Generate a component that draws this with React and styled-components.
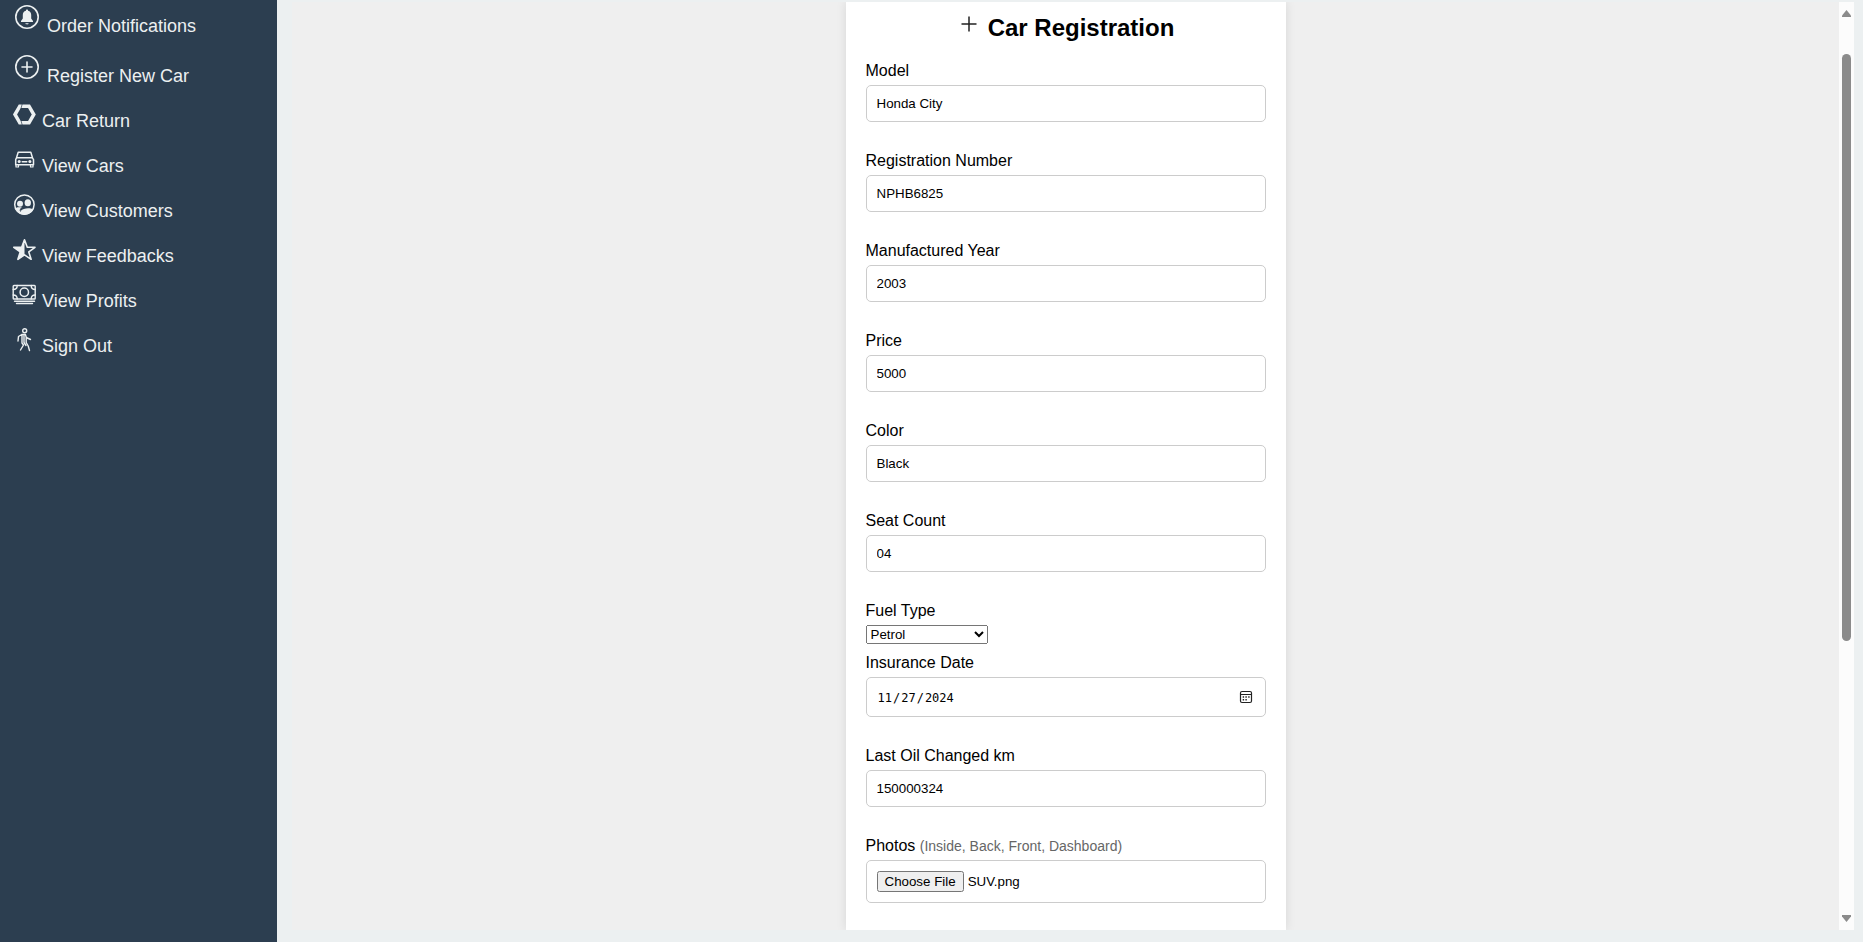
import React, { useEffect, useRef } from "react";
import styled, { createGlobalStyle } from "styled-components";

const GlobalStyle = createGlobalStyle`
  *, *::before, *::after { box-sizing: border-box; }
  body {
    margin: 0;
    background: #ecf0f1;
    color: #000;
    font-family: "Liberation Sans", Arial, sans-serif;
    font-size: 16px;
  }
`;

const Page = styled.div`
  display: flex;
  height: 100vh;
`;

const Sidebar = styled.nav`
  flex: 0 0 277px;
  background: #2c3e50;
`;

const NavList = styled.ul`
  list-style: none;
  margin: 0;
  padding: 1px 0 0 11px;
`;

const NavItem = styled.li`
  height: ${(p) => (p.$large ? 50 : 45)}px;
`;

const NavLink = styled.a`
  display: flex;
  align-items: flex-start;
  gap: ${(p) => (p.$large ? 4 : 5)}px;
  color: #ecf0f1;
  font-size: 18px;
  line-height: 20px;
  text-decoration: none;
`;

const NavIcon = styled.span`
  display: flex;
  align-items: center;
  justify-content: center;
  width: ${(p) => (p.$large ? 32 : 26)}px;
  height: ${(p) => (p.$large ? 32 : 28)}px;

  svg {
    display: block;
    width: 24px;
    height: 24px;
  }
`;

const NavText = styled.span`
  padding-top: ${(p) => (p.$large ? 15 : 10)}px;
`;

const Main = styled.main`
  flex: 1;
  min-width: 0;
  display: flex;
  margin: 2px 9px 12px 15px;
  background: #efefef;
`;

const Viewport = styled.div`
  flex: 1;
  display: flex;
  justify-content: center;
  overflow: hidden;
`;

const Card = styled.form`
  width: 440px;
  padding: 10px 20px 0;
  background: #fff;
  box-shadow: 0 0 10px rgba(0, 0, 0, 0.1);
`;

const Title = styled.h2`
  display: flex;
  justify-content: center;
  gap: 7px;
  margin: 0 0 18px;
  font-size: 24px;
  line-height: 32px;

  svg {
    width: 24px;
    height: 24px;
  }
`;

const Field = styled.div`
  margin-bottom: ${(p) => (p.$tight ? 10 : 30)}px;
`;

const Label = styled.label`
  display: block;
  margin-bottom: 5px;
  line-height: 18px;
`;

const Hint = styled.span`
  color: #666;
  font-size: 14px;
`;

const Input = styled.input`
  display: block;
  width: 100%;
  height: ${(p) => p.$height || 37}px;
  padding: 10px;
  border: 1px solid #ccc;
  border-radius: 5px;
  background: #fff;
  color: #000;
  font-family: "Liberation Sans", Arial, sans-serif;
`;

const DateBox = styled.div`
  position: relative;

  svg {
    position: absolute;
    top: 13px;
    right: 13px;
    width: 14px;
    height: 14px;
    pointer-events: none;
  }
`;

const DateInput = styled(Input)`
  padding-top: 12px;
  font-family: "DejaVu Sans Mono", monospace;
  font-size: 12px;

  &::-webkit-calendar-picker-indicator {
    opacity: 0;
  }
`;

const Select = styled.select`
  display: block;
  width: 122px;
  height: 19px;
  font-family: "Liberation Sans", Arial, sans-serif;
`;

const ScrollTrack = styled.div`
  flex: 0 0 15px;
  display: flex;
  flex-direction: column;
  align-items: center;
  padding: 8px 0;
  background: #fcfcfc;

  svg {
    flex: none;
    width: 9px;
    height: 7px;
    fill: #8b8b8b;
  }
`;

const ScrollLane = styled.div`
  flex: 1;
  display: flex;
  flex-direction: column;
  padding-top: 37px;
`;

const ScrollThumb = styled.div`
  width: 9px;
  height: 68.2%;
  border-radius: 5px;
  background: #8b8b8b;
`;

const line = { fill: "none", stroke: "currentColor", strokeLinecap: "round", strokeLinejoin: "round" };

const BellIcon = () => (
  <svg viewBox="0 0 24 24" {...line}>
    <circle cx="12" cy="12" r="11.2" strokeWidth="1.6" />
    <path d="M12 4.6c-.7 0-1.1.5-1.1 1.1C8.8 6.2 7.8 7.9 7.8 10v3.4L6 16v1h12v-1l-1.8-2.6V10c0-2.1-1-3.8-3.1-4.3 0-.6-.4-1.1-1.1-1.1zM10.3 18.2c.2.8.9 1.2 1.7 1.2s1.5-.4 1.7-1.2z" fill="currentColor" stroke="none" />
  </svg>
);

const PlusCircleIcon = () => (
  <svg viewBox="0 0 24 24" {...line}>
    <circle cx="12" cy="12" r="11.2" strokeWidth="1.6" />
    <path d="M12 7v10M7 12h10" strokeWidth="1.6" />
  </svg>
);

const NutIcon = () => (
  <svg viewBox="0 0 24 24" fill="none" stroke="currentColor">
    <path d="M3 11.5 7.8 3.2h9.2l4.8 8.300L17 19.800H7.800z" strokeWidth="3.500" />
    <path d="M9 5.500 10.200 1M9 17.500l1.200 4.500" stroke="#2c3e50" strokeWidth=".7" />
  </svg>
);

const CarIcon = () => (
  <svg viewBox="0 0 24 24" {...line}>
    <path d="M6.200 4.200h12.600l1.900 6.200.8 1.100v5.200H3.700v-5.200l.6-1.100zM4.500 9.800h16" strokeWidth="1.500" />
    <path d="M4 17v2h2.500v-2M18.500 17v2H21v-2" strokeWidth="1.200" />
    <path d="M10.200 13.700h4.600" strokeWidth="1.400" />
    <circle cx="7.200" cy="13.500" r="1.500" fill="currentColor" stroke="none" />
    <circle cx="17.900" cy="13.500" r="1.500" fill="currentColor" stroke="none" />
  </svg>
);

const CustomersIcon = () => (
  <svg viewBox="0 0 24 24">
    <circle cx="12.400" cy="11.600" r="9.700" fill="none" stroke="currentColor" strokeWidth="1.500" />
    <circle cx="8" cy="10.700" r="3" fill="currentColor" />
    <ellipse cx="15.800" cy="9.800" rx="3.200" ry="3.500" fill="currentColor" />
    <path d="M3.400 15.500c1-1.600 3-1.300 6.800-1.200-1.400 1-1.900 2.300-1.500 3.800 2.600-3.200 9.500-3.500 12.600-1.500-1.600 3.200-5 5.300-8.900 5.300s-7.400-2.500-9-6.400z" fill="currentColor" />
    <path d="M8.500 18.500c-.8-1.700.1-3.300 2-4.200" fill="none" stroke="#2c3e50" strokeWidth="1" />
  </svg>
);

const StarIcon = () => (
  <svg viewBox="0 0 24 24">
    <path d="M12.500 1.800 15.300 9.300H23l-6.200 4.600 2.300 7.400-6.600-4.400-6.600 4.400 2.300-7.400L1.800 9.300h7.900z" {...line} strokeWidth="1.600" />
    <path d="M12.500 1v16L5.600 22l2.500-8L1.200 9.100h8.300z" fill="currentColor" />
  </svg>
);

const CashIcon = () => (
  <svg viewBox="0 0 24 24" {...line} strokeWidth="1.400">
    <rect x="1.200" y="2.500" width="22" height="13.500" rx=".8" />
    <circle cx="12.300" cy="9.200" r="4.200" strokeWidth="1.500" />
    <path d="M1.200 6.500c2.800 0 4-1.500 4-4M23.200 6.500c-2.800 0-4-1.500-4-4M1.200 12c2.800 0 4 1.500 4 4M23.200 12c-2.800 0-4 1.500-4 4M2.500 18.200h20M4.500 20.500h16" />
  </svg>
);

const WalkIcon = () => (
  <svg viewBox="0 0 24 24" {...line} strokeWidth="1.400">
    <circle cx="12.700" cy="2.700" r="2" />
    <path d="M9.800 6.500h3.600l.8 2.500v5.500l2 3.500 1.300 4.500M9.800 6.500 6.500 8.500 6 13M10 6.500v8.500l1.500 2-3 5M14.200 9.500l4.300 2M12 7.500v7l2 3" />
  </svg>
);

const PlusIcon = () => (
  <svg viewBox="0 0 24 24" fill="none" stroke="#222" strokeWidth="1.500" aria-hidden="true">
    <path d="M12 4.500v15M4.500 12h15" />
  </svg>
);

const CalendarIcon = () => (
  <svg viewBox="0 0 14 14" fill="none" stroke="#222" aria-hidden="true">
    <rect x="1.500" y="1.500" width="11" height="11" rx="1.500" strokeWidth="1.200" />
    <path d="M1.500 4.500h11" />
    <path d="M6.400 7h1.400M9.200 7h1.400M3.700 7h1.400M3.700 9.700h1.400M6.400 9.700h1.400" strokeWidth="1.400" />
  </svg>
);

const navItems = [
  { text: "Order Notifications", Icon: BellIcon, large: true },
  { text: "Register New Car", Icon: PlusCircleIcon, large: true },
  { text: "Car Return", Icon: NutIcon },
  { text: "View Cars", Icon: CarIcon },
  { text: "View Customers", Icon: CustomersIcon },
  { text: "View Feedbacks", Icon: StarIcon },
  { text: "View Profits", Icon: CashIcon },
  { text: "Sign Out", Icon: WalkIcon },
];

const textFields = [
  { id: "model", label: "Model", value: "Honda City" },
  { id: "registration", label: "Registration Number", value: "NPHB6825" },
  { id: "year", label: "Manufactured Year", value: "2003" },
  { id: "price", label: "Price", value: "5000" },
  { id: "color", label: "Color", value: "Black" },
  { id: "seats", label: "Seat Count", value: "04" },
];

function TextField({ id, label, value }) {
  return (
    <Field>
      <Label htmlFor={id}>{label}</Label>
      <Input id={id} type="text" defaultValue={value} />
    </Field>
  );
}

function PhotoField() {
  const ref = useRef(null);

  useEffect(() => {
    const transfer = new DataTransfer();
    transfer.items.add(new File([""], "SUV.png", { type: "image/png" }));
    ref.current.files = transfer.files;
  }, []);

  return (
    <Field>
      <Label htmlFor="photos">
        Photos <Hint>(Inside, Back, Front, Dashboard)</Hint>
      </Label>
      <Input id="photos" type="file" ref={ref} $height={43} />
    </Field>
  );
}

function Scrollbar() {
  return (
    <ScrollTrack aria-hidden="true">
      <svg viewBox="0 0 9 7"><path d="M4.500 0 9 5.500V7H0V5.500z" /></svg>
      <ScrollLane>
        <ScrollThumb />
      </ScrollLane>
      <svg viewBox="0 0 9 7"><path d="M4.500 7 9 1.500V0H0v1.500z" /></svg>
    </ScrollTrack>
  );
}

export default function App() {
  return (
    <>
      <GlobalStyle />
      <Page>
        <Sidebar>
          <NavList>
            {navItems.map(({ text, Icon, large }) => (
              <NavItem key={text} $large={large}>
                <NavLink href="#" $large={large}>
                  <NavIcon $large={large} aria-hidden="true"><Icon /></NavIcon>
                  <NavText $large={large}>{text}</NavText>
                </NavLink>
              </NavItem>
            ))}
          </NavList>
        </Sidebar>
        <Main>
          <Viewport>
            <Card>
              <Title><PlusIcon />Car Registration</Title>
              {textFields.map((f) => <TextField key={f.id} {...f} />)}
              <Field $tight>
                <Label htmlFor="fuel">Fuel Type</Label>
                <Select id="fuel" defaultValue="Petrol">
                  <option>Petrol</option>
                  <option>Diesel</option>
                </Select>
              </Field>
              <Field>
                <Label htmlFor="insurance">Insurance Date</Label>
                <DateBox>
                  <DateInput id="insurance" type="date" defaultValue="2024-11-27" $height={40} />
                  <CalendarIcon />
                </DateBox>
              </Field>
              <TextField id="oil" label="Last Oil Changed km" value="150000324" />
              <PhotoField />
            </Card>
          </Viewport>
          <Scrollbar />
        </Main>
      </Page>
    </>
  );
}
